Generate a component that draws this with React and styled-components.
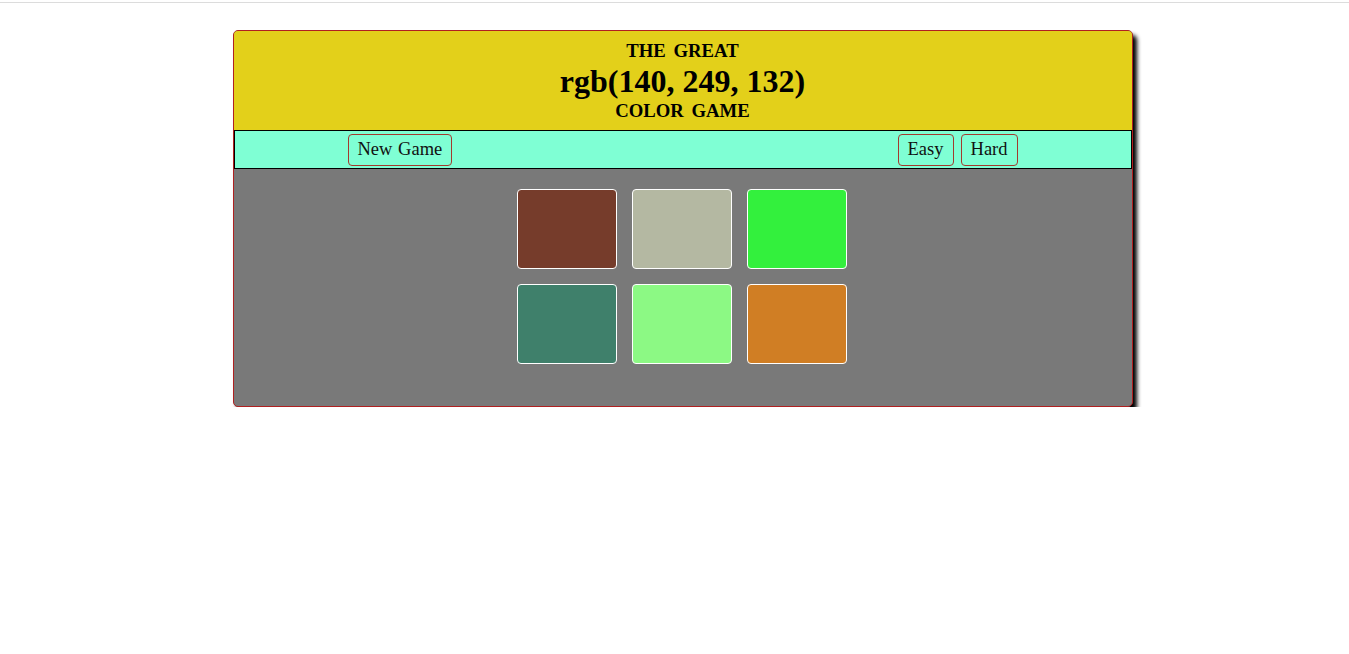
import styled, { createGlobalStyle } from 'styled-components';

const GlobalStyle = createGlobalStyle`
  html, body {
    margin: 0;
    padding: 0;
    background: #fff;
  }
  body {
    font-family: 'Liberation Serif', 'Times New Roman', serif;
    padding-left: 16px;
  }
`;

const TopRule = styled.div`
  margin: 2px 0 0 -16px;
  height: 1px;
  background-color: #dcdcdc;
`;

const Game = styled.div`
  width: 898px;
  margin: 27px auto 0;
  border: 1px solid #b02020;
  border-radius: 5px;
  overflow: hidden;
  box-shadow: 4px 5px 4px #000;
  background-color: #797979;
`;

const Header = styled.div`
  background-color: #e3d01a;
  text-align: center;
  font-weight: bold;
  padding: 10px 0 9px;
`;

const Small = styled.div`
  font-size: 18.72px;
  line-height: 20px;
  word-spacing: 3px;
`;

const Big = styled.h1`
  font-size: 32px;
  line-height: 38px;
  margin: 1px 0 1px;
`;

const Nav = styled.div`
  display: flex;
  justify-content: space-between;
  align-items: center;
  height: 37px;
  padding: 0 113px;
  background-color: #7fffd4;
  border: 1px solid #000;
`;

const Group = styled.div`
  display: flex;
  gap: 7px;
`;

const Button = styled.button`
  font-family: 'Liberation Serif', 'Times New Roman', serif;
  font-size: 18.5px;
  word-spacing: 1px;
  color: #111;
  background: transparent;
  border: 1px solid #a33a2e;
  border-radius: 4px;
  height: 32px;
  padding: 0 9px;
  cursor: pointer;
`;

const Board = styled.div`
  display: grid;
  grid-template-columns: repeat(3, 100px);
  gap: 15px;
  justify-content: center;
  padding: 20px 1px 42px 0;
`;

const Square = styled.div`
  height: 80px;
  box-sizing: border-box;
  border: 1px solid #fff;
  border-radius: 4px;
  background-color: ${(p) => p.$color};
`;

const colors = [
  'rgb(118, 60, 43)',
  'rgb(180, 184, 162)',
  'rgb(51, 240, 61)',
  'rgb(63, 128, 107)',
  'rgb(140, 249, 132)',
  'rgb(208, 126, 36)',
];

export default function App() {
  return (
    <>
      <GlobalStyle />
      <TopRule />
      <Game>
        <Header>
          <Small>THE GREAT</Small>
          <Big>rgb(140, 249, 132)</Big>
          <Small>COLOR GAME</Small>
        </Header>
        <Nav>
          <Button>New Game</Button>
          <Group>
            <Button>Easy</Button>
            <Button>Hard</Button>
          </Group>
        </Nav>
        <Board>
          {colors.map((c) => (
            <Square key={c} $color={c} />
          ))}
        </Board>
      </Game>
    </>
  );
}
